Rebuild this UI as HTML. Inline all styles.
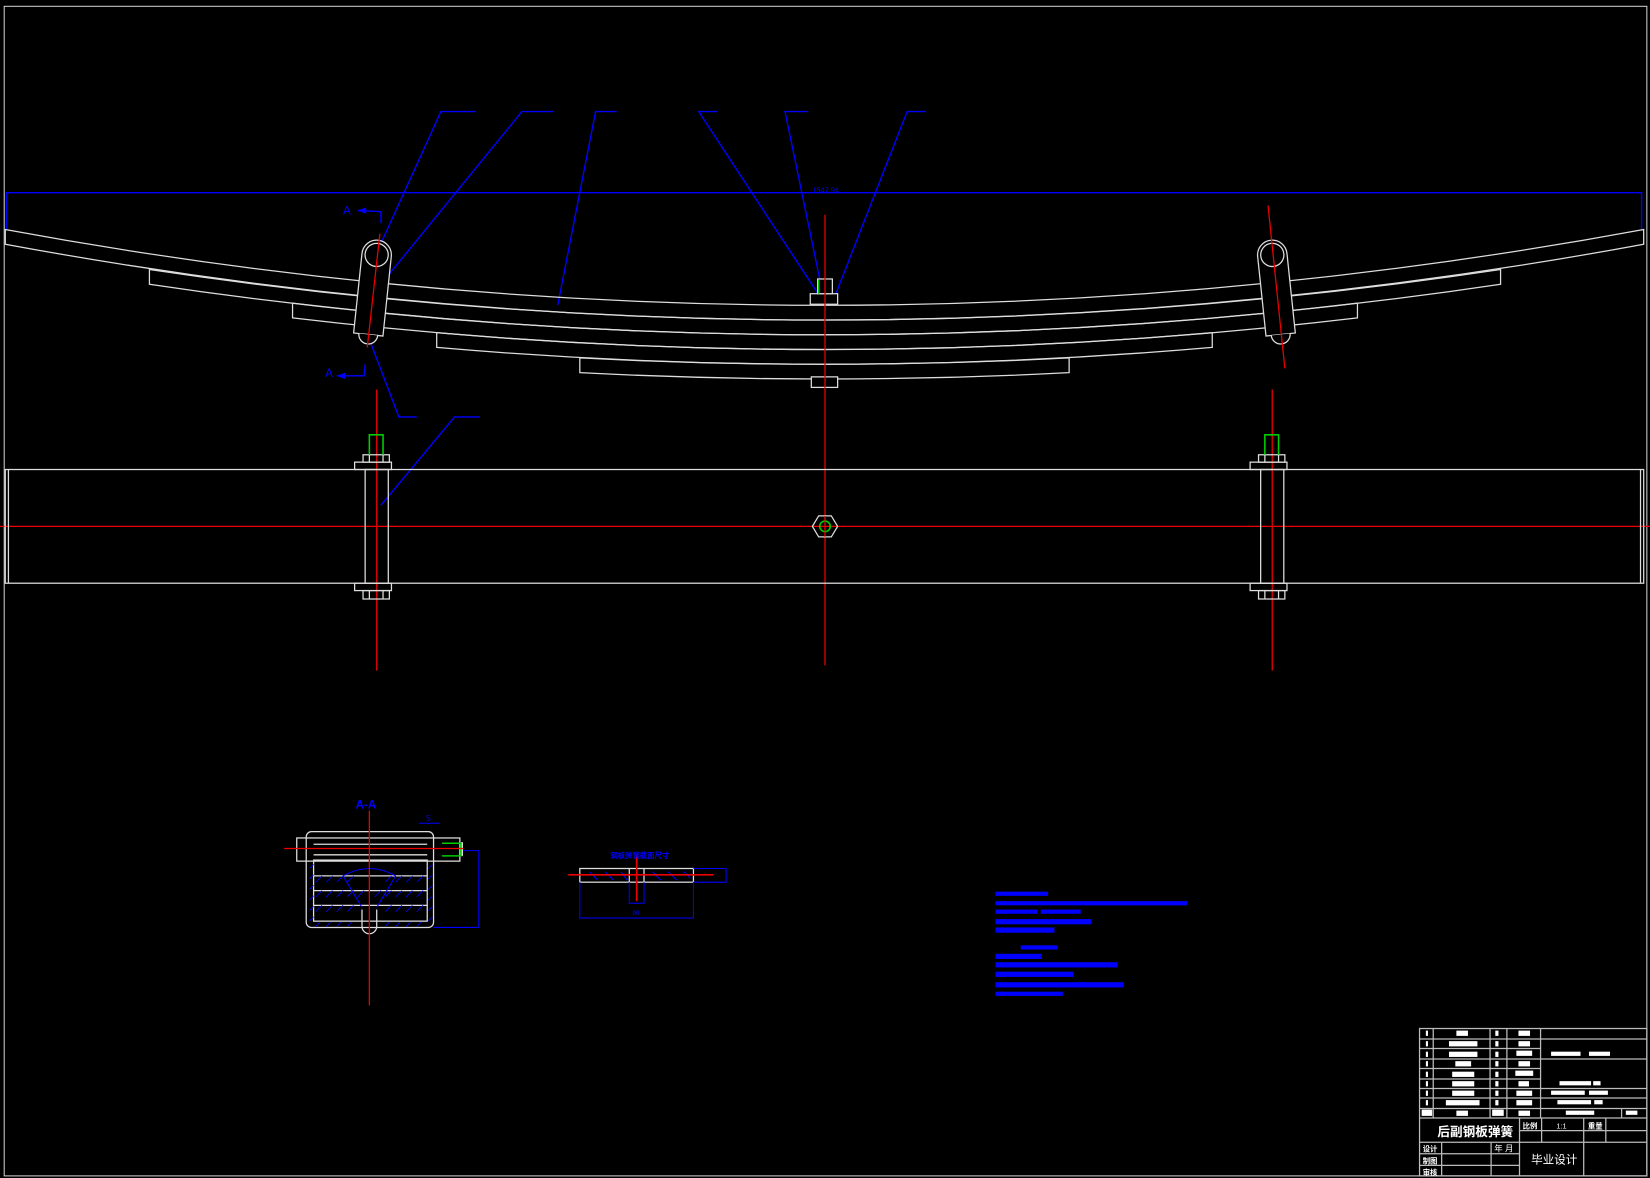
<!DOCTYPE html>
<html><head><meta charset="utf-8"><style>
html,body{margin:0;padding:0;background:#000;overflow:hidden}
svg{display:block}
text{font-family:"Liberation Sans","Noto Sans CJK SC",sans-serif}
</style></head><body>
<svg width="1650" height="1178" viewBox="0 0 1568 1119" preserveAspectRatio="none" xmlns="http://www.w3.org/2000/svg">
<rect width="1568" height="1119" fill="#000"/>
<rect x="4" y="6" width="1561" height="1111" fill="none" stroke="#ccc" stroke-width="1"/>

<g stroke="#00f" stroke-width="1.3" fill="none">
<polyline points="6,218 6,183 1560,183 1560,218"/>
<polyline points="452,106 419,106 358,240"/>
<polyline points="526,106 496,106 362,270"/>
<polyline points="586,106 566,106 530,290"/>
<polyline points="682,106 664,106 778,280"/>
<polyline points="768,106 746,106 780,270"/>
<polyline points="880,106 862,106 792,285"/>
<polyline points="396,396 379,396 352,325"/>
<polyline points="456,396 432,396 362,480"/>
<polyline points="340,200 362,201 362,212"/>
<polyline points="320,357 346,357 347,346"/>
</g>
<g fill="#00f" font-size="11">
<text x="326" y="204">A</text><text x="309" y="358">A</text>
<text x="772" y="183" font-size="7">1547.94</text>
<polygon points="340,200 348,197 348,203"/><polygon points="320,357 328,354 328,360"/>
</g>

<g stroke="#ddd" stroke-width="1.2" fill="none">
<path d="M5,218 Q784,362 1562,218 L1562,232 Q784,376 5,232 Z"/>
<path d="M142,256 Q784,352 1426,256 L1426,270 Q784,366 142,270 Z"/>
<path d="M278,288 Q784,348 1290,288 L1290,302 Q784,362 278,302 Z"/>
<path d="M415,316 Q784,348 1152,316 L1152,330 Q784,362 415,330 Z"/>
<path d="M551,340 Q784,352 1016,340 L1016,354 Q784,366 551,354 Z"/>
</g>
<g stroke="#ddd" stroke-width="1.2" fill="#000">
<rect x="770" y="279" width="26" height="10"/>
<rect x="777" y="265" width="14" height="14"/>
<rect x="771" y="358" width="25" height="10"/>
</g>
<line x1="778" y1="266" x2="778" y2="279" stroke="#0c0" stroke-width="1.5"/>

<g stroke="#ddd" stroke-width="1.2" fill="#000">
<g transform="rotate(6 355 270)">
<path d="M341,318 L341,242 A14,14 0 0 1 369,242 L369,318 Z"/>
<path d="M346,318 A9,9 0 0 0 364,318"/>
<circle cx="355" cy="242" r="11"/>
</g>
<g transform="rotate(-6 1212 270)">
<path d="M1198,318 L1198,242 A14,14 0 0 1 1226,242 L1226,318 Z"/>
<path d="M1203,318 A9,9 0 0 0 1221,318"/>
<circle cx="1212" cy="242" r="11"/>
</g>
</g>

<g stroke="#e00" stroke-width="1.2">
<line x1="784" y1="204" x2="784" y2="632"/>
<line x1="358" y1="370" x2="358" y2="637"/>
<line x1="1209" y1="370" x2="1209" y2="637"/>
<line x1="361" y1="222" x2="349" y2="330"/>
<line x1="1205" y1="195" x2="1221" y2="350"/>
<line x1="0" y1="500" x2="1568" y2="500"/>
</g>

<g stroke="#ddd" stroke-width="1.2" fill="none">
<rect x="5" y="446" width="1557" height="108"/>
<line x1="8" y1="446" x2="8" y2="554"/><line x1="1559" y1="446" x2="1559" y2="554"/>
<g>
<rect x="347" y="446" width="22" height="108"/>
<rect x="337" y="439" width="35" height="7"/><rect x="345" y="432" width="25" height="7"/>
<rect x="337" y="554" width="35" height="7"/><rect x="345" y="561" width="25" height="8"/>
<line x1="351" y1="561" x2="351" y2="569"/><line x1="364" y1="561" x2="364" y2="569"/>
<line x1="351" y1="432" x2="351" y2="439"/><line x1="364" y1="432" x2="364" y2="439"/>
</g>
<g transform="translate(851 0)">
<rect x="347" y="446" width="22" height="108"/>
<rect x="337" y="439" width="35" height="7"/><rect x="345" y="432" width="25" height="7"/>
<rect x="337" y="554" width="35" height="7"/><rect x="345" y="561" width="25" height="8"/>
<line x1="351" y1="561" x2="351" y2="569"/><line x1="364" y1="561" x2="364" y2="569"/>
<line x1="351" y1="432" x2="351" y2="439"/><line x1="364" y1="432" x2="364" y2="439"/>
</g>
<polygon points="772,500 778,490 790,490 796,500 790,510 778,510"/>
</g>
<g stroke="#0c0" stroke-width="1.5" fill="none">
<polyline points="351,432 351,413 364,413 364,432"/>
<polyline points="1202,432 1202,413 1215,413 1215,432"/>
<circle cx="784" cy="500" r="5"/>
</g>
<line x1="784" y1="490" x2="784" y2="510" stroke="#e00"/>

<!-- section A-A -->
<g stroke="#ddd" stroke-width="1.2" fill="none">
<rect x="291" y="790" width="121" height="91" rx="5"/>
<rect x="298" y="817" width="108" height="58"/>
<rect x="282" y="796" width="155" height="22"/>
<line x1="298" y1="802" x2="406" y2="802"/><line x1="298" y1="812" x2="406" y2="812"/>
<line x1="298" y1="832" x2="406" y2="832"/><line x1="298" y1="846" x2="406" y2="846"/><line x1="298" y1="860" x2="406" y2="860"/>
<path d="M344,864 L344,880 A7,7 0 0 0 358,880 L358,864"/>
</g>
<g stroke="#00f" stroke-width="0.8" fill="none">
<path d="M300,838 l6,-6 M310,838 l6,-6 M320,838 l6,-6 M330,838 l6,-6 M366,838 l6,-6 M376,838 l6,-6 M386,838 l6,-6 M396,838 l6,-6
M300,852 l6,-6 M310,852 l6,-6 M320,852 l6,-6 M330,852 l6,-6 M340,852 l6,-6 M356,852 l6,-6 M366,852 l6,-6 M376,852 l6,-6 M386,852 l6,-6 M396,852 l6,-6
M300,866 l6,-6 M310,866 l6,-6 M320,866 l6,-6 M330,866 l6,-6 M366,866 l6,-6 M376,866 l6,-6 M386,866 l6,-6 M396,866 l6,-6
M294,825 l4,-4 M294,835 l4,-4 M294,845 l4,-4 M294,855 l4,-4 M294,865 l4,-4 M294,875 l4,-4
M407,825 l4,-4 M407,835 l4,-4 M407,845 l4,-4 M407,855 l4,-4 M407,865 l4,-4 M407,875 l4,-4
M300,880 l4,-4 M310,880 l4,-4 M320,880 l4,-4 M330,880 l4,-4 M366,880 l4,-4 M376,880 l4,-4 M386,880 l4,-4 M396,880 l4,-4"/>
</g>
<g stroke="#00f" stroke-width="1" fill="none">
<path d="M326,832 Q351,818 376,832"/>
<path d="M326,832 L344,862 M376,832 L358,862"/>
<polyline points="412,881 455,881 455,808 440,808"/>
<line x1="398" y1="782" x2="418" y2="782"/>
</g>
<rect x="438" y="800" width="2" height="13" fill="#ddd"/>
<polyline points="420,801 438,801 438,813 420,813" stroke="#0c0" stroke-width="1.5" fill="none"/>
<line x1="351" y1="770" x2="351" y2="955" stroke="#e00" stroke-width="1.2"/>
<line x1="270" y1="806" x2="440" y2="806" stroke="#e00" stroke-width="1.2"/>
<text x="338" y="768" fill="#00f" font-size="11" font-weight="bold">A-A</text>
<text x="405" y="780" fill="#00f" font-size="8">5</text>

<!-- spring cross-section -->
<g stroke="#ddd" stroke-width="1.2" fill="none">
<rect x="551" y="825" width="108" height="13"/>
<line x1="598" y1="825" x2="598" y2="838"/><line x1="612" y1="825" x2="612" y2="838"/>
</g>
<g stroke="#00f" stroke-width="1" fill="none">
<path d="M560,828 L568,836 M575,828 L583,836 M590,828 L596,836 M620,828 L628,836 M635,828 L643,836 M650,828 L656,834"/>
<polyline points="551,838 551,872 659,872 659,838"/>
<polyline points="659,825 690,825 690,838 659,838"/>
<polyline points="598,838 598,858 612,858 612,838"/>
</g>
<line x1="605" y1="812" x2="605" y2="856" stroke="#e00" stroke-width="1.5"/>
<line x1="540" y1="831" x2="678" y2="831" stroke="#e00" stroke-width="1.5"/>
<text x="580" y="815" fill="#00f" font-size="7" font-weight="bold">钢板弹簧截面尺寸</text>
<text x="601" y="869" fill="#00f" font-size="6">90</text>

<g fill="#00f">
<rect x="946" y="847" width="50" height="4"/>
<rect x="946" y="856" width="182" height="4"/>
<rect x="946" y="864" width="40" height="4"/><rect x="989" y="864" width="38" height="4"/>
<rect x="946" y="873" width="91" height="5"/>
<rect x="946" y="881" width="56" height="5"/>
<rect x="970" y="898" width="35" height="4"/>
<rect x="946" y="906" width="44" height="5"/>
<rect x="946" y="914" width="116" height="5"/>
<rect x="946" y="923" width="74" height="5"/>
<rect x="946" y="933" width="122" height="5"/>
<rect x="946" y="942" width="64" height="4"/>
</g>

<g stroke="#bbb" stroke-width="1.2" fill="none">
<rect x="1349" y="977" width="216" height="140"/>
<line x1="1362" y1="977" x2="1362" y2="1062"/>
<line x1="1416" y1="977" x2="1416" y2="1062"/>
<line x1="1432" y1="977" x2="1432" y2="1062"/>
<line x1="1464" y1="977" x2="1464" y2="1062"/>
<path d="M1349,987 H1565 M1349,996 H1464 M1349,1006 H1565 M1349,1015 H1464 M1349,1025 H1464 M1349,1034 H1565 M1349,1043 H1565 M1349,1053 H1565 M1349,1062 H1565"/>
<line x1="1541" y1="1053" x2="1541" y2="1062"/>
<path d="M1349,1085 H1444 M1349,1096 H1444 M1349,1107 H1444 M1444,1074 H1565 M1444,1085 H1565"/>
<line x1="1370" y1="1085" x2="1370" y2="1117"/>
<line x1="1417" y1="1085" x2="1417" y2="1117"/>
<line x1="1444" y1="1062" x2="1444" y2="1117"/>
<line x1="1465" y1="1062" x2="1465" y2="1085"/>
<line x1="1505" y1="1062" x2="1505" y2="1117"/>
<line x1="1526" y1="1062" x2="1526" y2="1085"/>
</g>
<g fill="#fff">
<rect x="1355" y="979" width="2" height="5"/><rect x="1384" y="979" width="11" height="5"/><rect x="1421" y="979" width="3" height="5"/><rect x="1443" y="979" width="11" height="5"/>
<rect x="1355" y="989" width="2" height="5"/><rect x="1377" y="989" width="27" height="5"/><rect x="1421" y="989" width="3" height="5"/><rect x="1443" y="989" width="11" height="5"/>
<rect x="1355" y="999" width="2" height="5"/><rect x="1377" y="999" width="27" height="5"/><rect x="1421" y="999" width="3" height="5"/><rect x="1441" y="998" width="15" height="5"/><rect x="1474" y="999" width="28" height="4"/><rect x="1510" y="999" width="20" height="4"/>
<rect x="1355" y="1008" width="2" height="5"/><rect x="1383" y="1008" width="15" height="5"/><rect x="1421" y="1008" width="3" height="5"/><rect x="1443" y="1008" width="11" height="5"/>
<rect x="1355" y="1018" width="2" height="5"/><rect x="1380" y="1018" width="21" height="5"/><rect x="1421" y="1018" width="3" height="5"/><rect x="1440" y="1017" width="17" height="5"/>
<rect x="1355" y="1027" width="2" height="5"/><rect x="1380" y="1027" width="21" height="5"/><rect x="1421" y="1027" width="3" height="5"/><rect x="1443" y="1027" width="10" height="5"/><rect x="1482" y="1027" width="30" height="4"/><rect x="1514" y="1027" width="7" height="4"/>
<rect x="1355" y="1036" width="2" height="5"/><rect x="1380" y="1036" width="21" height="5"/><rect x="1421" y="1036" width="3" height="5"/><rect x="1441" y="1036" width="15" height="5"/><rect x="1474" y="1036" width="32" height="4"/><rect x="1510" y="1036" width="18" height="4"/>
<rect x="1355" y="1045" width="2" height="5"/><rect x="1374" y="1045" width="32" height="5"/><rect x="1421" y="1045" width="3" height="5"/><rect x="1441" y="1045" width="15" height="5"/><rect x="1480" y="1045" width="32" height="4"/><rect x="1515" y="1045" width="8" height="4"/>
<rect x="1351" y="1054" width="10" height="6"/><rect x="1384" y="1055" width="11" height="5"/><rect x="1418" y="1054" width="11" height="6"/><rect x="1443" y="1055" width="11" height="5"/><rect x="1488" y="1055" width="27" height="4"/><rect x="1545" y="1055" width="11" height="4"/>
</g>
<g fill="#fff">
<text x="1366" y="1079" font-size="12" font-family="'Noto Sans CJK SC',sans-serif" font-weight="bold">后副钢板弹簧</text>
<text x="1447" y="1072" font-size="7" font-weight="bold">比例</text>
<text x="1479" y="1072" font-size="7">1:1</text>
<text x="1509" y="1072" font-size="7" font-weight="bold">重量</text>
<text x="1352" y="1094" font-size="7" font-weight="bold">设计</text>
<text x="1352" y="1105" font-size="7" font-weight="bold">制图</text>
<text x="1352" y="1116" font-size="7" font-weight="bold">审核</text>
<text x="1420" y="1094" font-size="8">年 月</text>
<text x="1455" y="1105" font-size="11">毕业设计</text>
</g>
</svg>
</body></html>
